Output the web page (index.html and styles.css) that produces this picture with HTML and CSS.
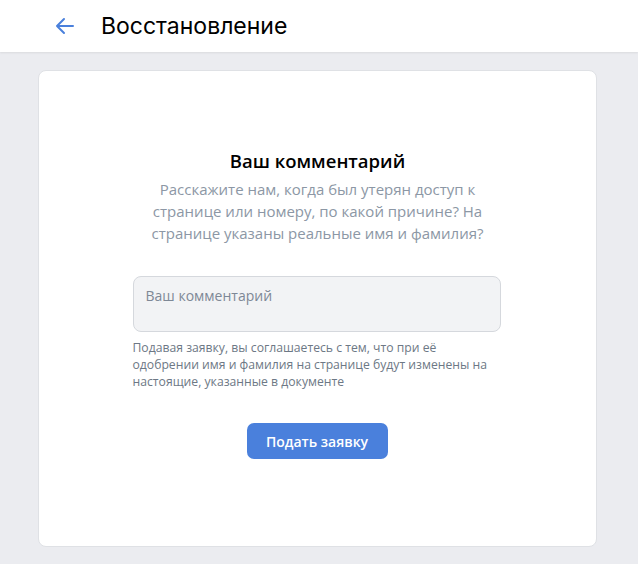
FILE: index.html
```html
<!DOCTYPE html>
<html>
<head>
  <meta charset="utf-8">
  <title>Восстановление</title>
  <link rel="stylesheet" href="styles.css">
</head>
<body>
  <header class="top-bar">
    <a class="back" href="#">
      <svg width="22" height="22" viewBox="0 0 22 22" fill="none" stroke="#4a80dc" stroke-width="2" stroke-linecap="round" stroke-linejoin="round">
        <path d="M19 11H3M10 4l-7 7 7 7"/>
      </svg>
    </a>
    <h1>Восстановление</h1>
  </header>

  <main>
    <div class="card">
      <h2>Ваш комментарий</h2>
      <p class="lead">Расскажите нам, когда был утерян доступ к странице или номеру, по какой причине? На странице указаны реальные имя и фамилия?</p>

      <div class="form">
        <textarea placeholder="Ваш комментарий"></textarea>
        <p class="note">Подавая заявку, вы соглашаетесь с тем, что при её одобрении имя и фамилия на странице будут изменены на настоящие, указанные в документе</p>
      </div>

      <button class="submit">Подать заявку</button>
    </div>
  </main>
</body>
</html>
```

FILE: styles.css
```css
/* общие */
body {
  margin: 0;
  background: #ebecf0;
  font-family: "Open Sans", "Liberation Sans", sans-serif;
}

/* шапка */
.top-bar {
  height: 52px;
  background: #fff;
  display: flex;
  align-items: center;
  box-shadow: 0 1px 2px rgba(0, 0, 0, 0.08);
}

.back {
  display: flex;
  margin-left: 54px;
  margin-right: 25px;
}

.top-bar h1 {
  margin: 0;
  font-family: "Inter", "Roboto", sans-serif;
  font-size: 23px;
  font-weight: 400;
  color: #000;
}

/* контент */
main {
  padding: 18px 41px 18px 38px;
}

.card {
  background: #fff;
  border: 1px solid #dfe1e5;
  border-radius: 8px;
  height: 477px;
  box-sizing: border-box;
  display: flex;
  flex-direction: column;
  align-items: center;
  padding-top: 78px;
}

.card h2 {
  margin: 0;
  font-size: 18.5px;
  font-weight: 600;
  color: #000;
  line-height: 24px;
}

.lead {
  margin: 5px 0 0;
  width: 345px;
  text-align: center;
  font-size: 15px;
  line-height: 22px;
  color: #8c97a5;
}

.form {
  width: 368px;
  margin: 32px 2px 0 0;
}

textarea {
  display: block;
  width: 100%;
  height: 56px;
  box-sizing: border-box;
  resize: none;
  background: #f2f3f5;
  border: 1px solid #d5d8dd;
  border-radius: 8px;
  padding: 9px 12px;
  font-family: inherit;
  font-size: 14px;
  color: #000;
}

textarea::placeholder {
  color: #7e8896;
}

.note {
  margin: 7px 0 0;
  width: 362px;
  font-size: 12.2px;
  line-height: 17px;
  color: #6d7885;
}

.submit {
  margin: 33px 1px 0 0;
  width: 141px;
  height: 36px;
  border: 0;
  border-radius: 7px;
  background: #4a80dc;
  color: #fff;
  font-family: inherit;
  font-size: 14px;
  font-weight: 600;
}
```
